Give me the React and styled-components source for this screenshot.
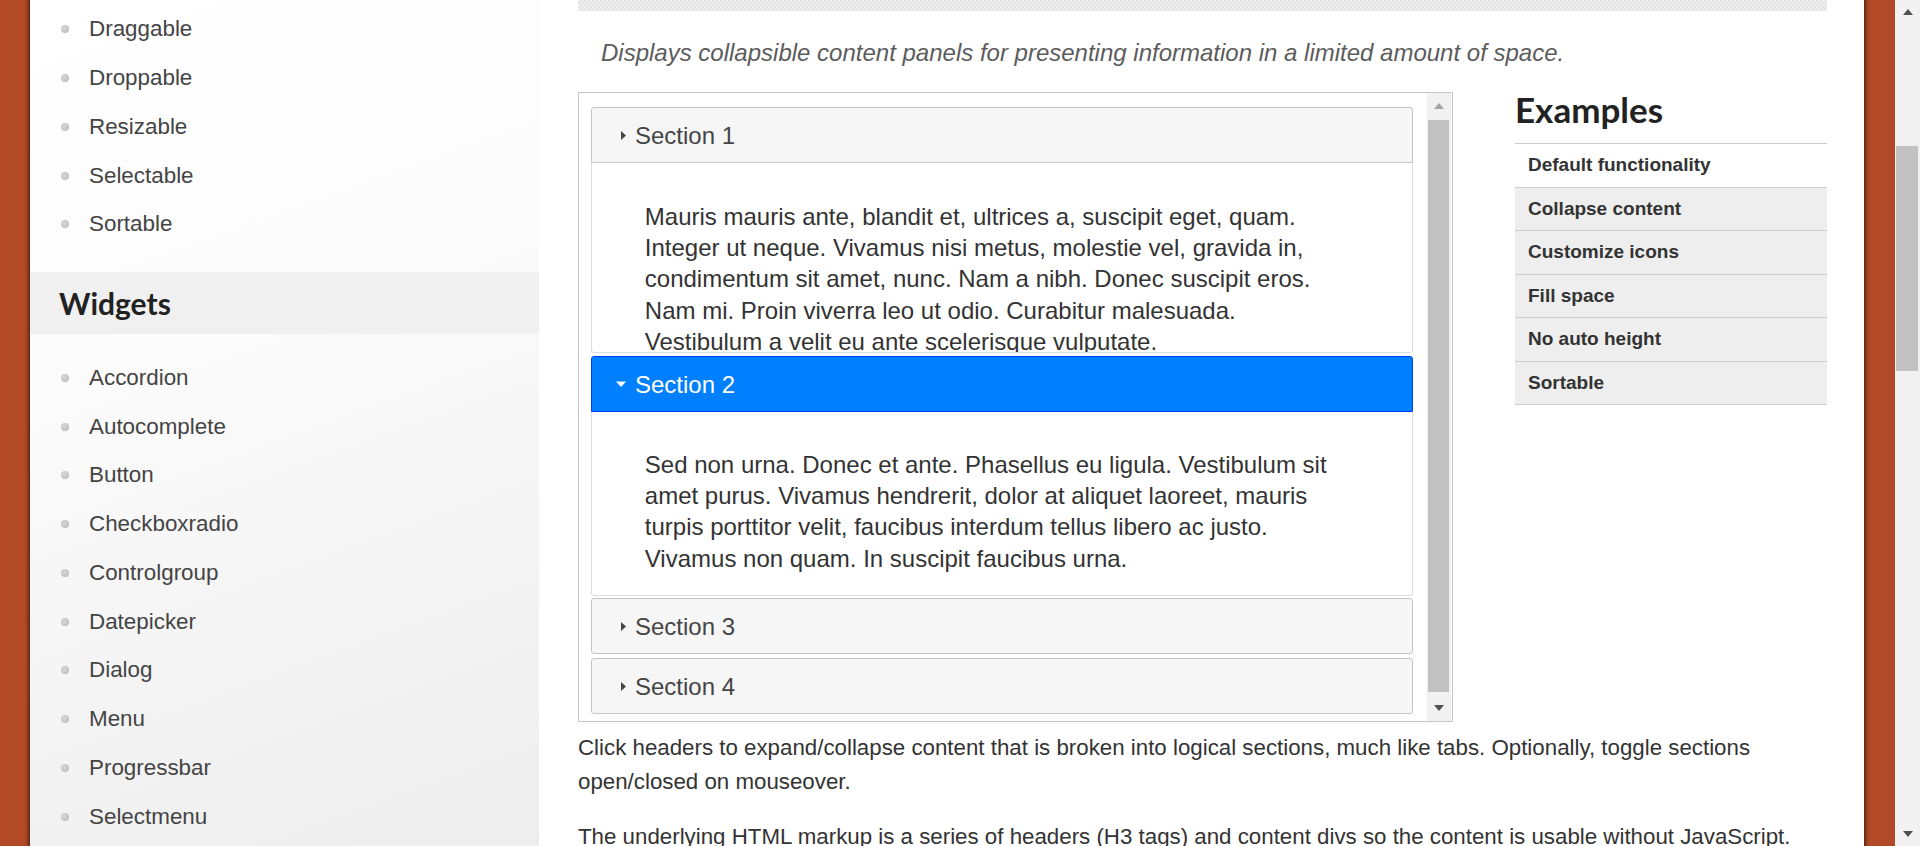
import React from "react";
import styled, { createGlobalStyle } from "styled-components";

const GlobalStyle = createGlobalStyle`
  html, body {
    margin: 0;
    padding: 0;
    overflow: hidden;
  }
  body {
    font-family: "Liberation Sans", Arial, sans-serif;
    background: #ffffff;
  }
  * {
    box-sizing: border-box;
  }
`;

const Page = styled.div`
  display: flex;
  width: 1920px;
  height: 846px;
  overflow: hidden;
`;

// orange page border, with the dark shade on the side facing the content
const Edge = styled.div`
  flex: 0 0 ${(p) => p.$w}px;
  background: linear-gradient(
    ${(p) => (p.$side === "left" ? "to left" : "to right")},
    #5a2615 0,
    #86381e 2px,
    #a9461f 4px,
    #b24a27 6px,
    #b24a27 100%
  );
`;

const Sidebar = styled.nav`
  flex: 0 0 509px;
  padding-top: 5px;
  background: linear-gradient(160deg, #ffffff 0%, #fbfbfb 40%, #ededed 100%);
`;

const NavList = styled.ul`
  list-style: none;
  margin: 0 0 ${(p) => p.$gap}px;
  padding: 0;
`;

const NavItem = styled.li`
  display: flex;
  align-items: center;
  gap: 20px;
  height: 48.75px;
  padding-left: 31px;
  font-size: 22.4px;
  color: #444444;
`;

const Bullet = styled.span`
  flex: 0 0 8px;
  height: 8px;
  border-radius: 50%;
  background: radial-gradient(circle at 40% 40%, #d9d9d9, #b4b4b4);
`;

const NavHeading = styled.h2`
  display: flex;
  align-items: center;
  height: 62px;
  margin: 0 0 19.6px;
  padding-left: 29px;
  background: #f0f0f0;
  font-family: Lato, "Open Sans", sans-serif;
  font-weight: 700;
  font-size: 30px;
  color: #222222;
`;

const Main = styled.main`
  flex: 0 0 1325px;
  padding: 0 37px 0 39px;
  background: #ffffff;
`;

const Stripe = styled.div`
  height: 11px;
  background: repeating-conic-gradient(#e3e3e3 0 25%, #efefef 0 50%) 0 0 / 4px 4px;
`;

const Intro = styled.p`
  margin: 27px 0 24px;
  padding-left: 23px;
  font-style: italic;
  font-size: 24px;
  line-height: 30px;
  color: #5c5c5c;
`;

const DemoRow = styled.div`
  display: flex;
  align-items: flex-start;
  gap: 62px;
`;

const DemoFrame = styled.div`
  flex: 0 0 875px;
  height: 630px;
  display: flex;
  border: 1px solid #c6c6c6;
  background: #ffffff;
`;

const FrameBody = styled.div`
  flex: 1;
  padding: 14px 14px 0 12px;
  overflow: hidden;
`;

const SectionHeader = styled.h3`
  display: flex;
  align-items: center;
  margin: ${(p) => p.$gap}px 0 0;
  padding: 11.5px 12px 11.5px 21px;
  font-size: 24px;
  line-height: 31px;
  font-weight: 400;
  border: 1px solid ${(p) => (p.$active ? "#003eff" : "#c5c5c5")};
  background: ${(p) => (p.$active ? "#007fff" : "#f6f6f6")};
  color: ${(p) => (p.$active ? "#ffffff" : "#454545")};
  border-radius: ${(p) => (p.$open ? "3px 3px 0 0" : "3px")};
`;

const HeaderIcon = styled.svg`
  flex: 0 0 16px;
  height: 16px;
  margin-right: 6px;
`;

const Panel = styled.div`
  height: ${(p) => p.$h}px;
  overflow: hidden;
  padding: ${(p) => p.$pt}px 2.2em 0;
  border: 1px solid #dddddd;
  border-top: 0;
  border-radius: 0 0 3px 3px;
  background: #ffffff;
  font-size: 24px;
  line-height: 31.2px;
  color: #333333;

  p {
    margin: 0;
  }
`;

const Scrollbar = styled.div`
  flex: 0 0 ${(p) => p.$w}px;
  display: flex;
  flex-direction: column;
  margin: ${(p) => p.$margin};
  background: #f1f1f1;
`;

const ArrowButton = styled.div`
  flex: 0 0 ${(p) => p.$h}px;
  display: flex;
  align-items: center;
  justify-content: center;
`;

const Track = styled.div`
  flex: 1;
  padding: 0 2px 0 1px;
`;

const Thumb = styled.div`
  background: #c1c1c1;
`;

const Examples = styled.aside`
  flex: 0 0 312px;
`;

const ExamplesTitle = styled.h2`
  margin: 0 0 17px;
  font-family: Lato, "Open Sans", sans-serif;
  font-weight: 700;
  font-size: 35px;
  line-height: 34px;
  color: #222222;
`;

const ExampleList = styled.ul`
  list-style: none;
  margin: 0;
  padding: 0;
  border-top: 1px solid #cccccc;
`;

const ExampleItem = styled.li`
  display: flex;
  align-items: center;
  height: 43.5px;
  padding-left: 13px;
  border-bottom: 1px solid #cccccc;
  background: ${(p) => (p.$current ? "#ffffff" : "#eeeeee")};
  font-size: 19px;
  font-weight: 700;
  color: #333333;
`;

const Para = styled.p`
  margin: ${(p) => p.$mt}px 0 0;
  font-size: 22.3px;
  line-height: 34.5px;
  color: #333333;
`;

const interactions = ["Draggable", "Droppable", "Resizable", "Selectable", "Sortable"];
const widgets = [
  "Accordion",
  "Autocomplete",
  "Button",
  "Checkboxradio",
  "Controlgroup",
  "Datepicker",
  "Dialog",
  "Menu",
  "Progressbar",
  "Selectmenu",
];
const examples = [
  "Default functionality",
  "Collapse content",
  "Customize icons",
  "Fill space",
  "No auto height",
  "Sortable",
];

const sections = [
  {
    title: "Section 1",
    gap: 0,
    open: true,
    active: false,
    panel: { h: 190, pt: 38 },
    text:
      "Mauris mauris ante, blandit et, ultrices a, suscipit eget, quam. Integer ut neque. Vivamus nisi metus, molestie vel, gravida in, condimentum sit amet, nunc. Nam a nibh. Donec suscipit eros. Nam mi. Proin viverra leo ut odio. Curabitur malesuada. Vestibulum a velit eu ante scelerisque vulputate.",
  },
  {
    title: "Section 2",
    gap: 3,
    open: true,
    active: true,
    panel: { h: 184, pt: 37 },
    text:
      "Sed non urna. Donec et ante. Phasellus eu ligula. Vestibulum sit amet purus. Vivamus hendrerit, dolor at aliquet laoreet, mauris turpis porttitor velit, faucibus interdum tellus libero ac justo. Vivamus non quam. In suscipit faucibus urna.",
  },
  { title: "Section 3", gap: 2, open: false, active: false },
  { title: "Section 4", gap: 4, open: false, active: false },
];

const Arrow = ({ dir, color }) => (
  <svg width="10" height="6" viewBox="0 0 10 6">
    <polygon points={dir === "up" ? "0,6 10,6 5,0" : "0,0 10,0 5,6"} fill={color} />
  </svg>
);

const Icon = ({ active }) => (
  <HeaderIcon viewBox="0 0 16 16">
    {active ? (
      <polygon points="3,5.5 13,5.5 8,11" fill="#ffffff" />
    ) : (
      <polygon points="8,4 13,8.5 8,13" fill="#454545" />
    )}
  </HeaderIcon>
);

const ScrollBar = ({ w, margin, btn, thumbTop, thumbHeight, upColor, downColor }) => (
  <Scrollbar $w={w} $margin={margin}>
    <ArrowButton $h={btn}>
      <Arrow dir="up" color={upColor} />
    </ArrowButton>
    <Track>
      <Thumb style={{ marginTop: thumbTop, height: thumbHeight }} />
    </Track>
    <ArrowButton $h={btn}>
      <Arrow dir="down" color={downColor} />
    </ArrowButton>
  </Scrollbar>
);

export default function App() {
  return (
    <>
      <GlobalStyle />
      <Page>
        <Edge $w={30} $side="left" />
        <Sidebar>
          <NavList $gap={23.25}>
            {interactions.map((name) => (
              <NavItem key={name}>
                <Bullet />
                {name}
              </NavItem>
            ))}
          </NavList>
          <NavHeading>Widgets</NavHeading>
          <NavList $gap={0}>
            {widgets.map((name) => (
              <NavItem key={name}>
                <Bullet />
                {name}
              </NavItem>
            ))}
          </NavList>
        </Sidebar>

        <Main>
          <Stripe />
          <Intro>
            Displays collapsible content panels for presenting information in a limited amount of
            space.
          </Intro>
          <DemoRow>
            <DemoFrame>
              <FrameBody>
                {sections.map((s) => (
                  <React.Fragment key={s.title}>
                    <SectionHeader $gap={s.gap} $open={s.open} $active={s.active}>
                      <Icon active={s.active} />
                      {s.title}
                    </SectionHeader>
                    {s.panel && (
                      <Panel $h={s.panel.h} $pt={s.panel.pt}>
                        <p>{s.text}</p>
                      </Panel>
                    )}
                  </React.Fragment>
                ))}
              </FrameBody>
              <ScrollBar
                w={24}
                margin="0 1px 0 0"
                btn={26}
                thumbTop={1}
                thumbHeight={572}
                upColor="#a3a3a3"
                downColor="#505050"
              />
            </DemoFrame>
            <Examples>
              <ExamplesTitle>Examples</ExamplesTitle>
              <ExampleList>
                {examples.map((name, i) => (
                  <ExampleItem key={name} $current={i === 0}>
                    {name}
                  </ExampleItem>
                ))}
              </ExampleList>
            </Examples>
          </DemoRow>
          <Para $mt={8.75}>
            Click headers to expand/collapse content that is broken into logical sections, much
            like tabs. Optionally, toggle sections open/closed on mouseover.
          </Para>
          <Para $mt={20}>
            The underlying HTML markup is a series of headers (H3 tags) and content divs so the
            content is usable without JavaScript.
          </Para>
        </Main>

        <Edge $w={31} $side="right" />
        <ScrollBar
          w={25}
          margin="0"
          btn={24}
          thumbTop={122}
          thumbHeight={225}
          upColor="#505050"
          downColor="#505050"
        />
      </Page>
    </>
  );
}
